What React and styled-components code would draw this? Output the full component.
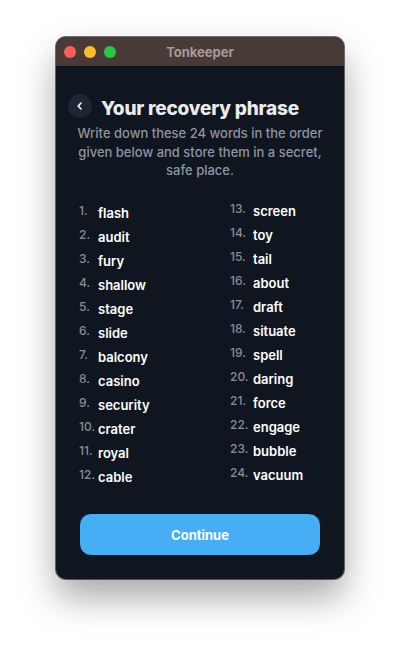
import React from "react"
import styled, { createGlobalStyle } from "styled-components"

const GlobalStyle = createGlobalStyle`
  html, body {
    margin: 0;
    padding: 0;
    background: #ffffff;
  }
  body {
    font-family: Inter, "DejaVu Sans", sans-serif;
  }
`

const Page = styled.div`
  width: 400px;
  height: 653px;
  padding: 37px 0 0 56px;
  box-sizing: border-box;
`

const Window = styled.div`
  width: 288px;
  height: 542px;
  border-radius: 10px;
  overflow: hidden;
  display: flex;
  flex-direction: column;
  background: #10161f;
  box-shadow: 0 0 0 1px rgba(0, 0, 0, 0.55), 0 18px 36px rgba(0, 0, 0, 0.35);
`

const TitleBar = styled.div`
  height: 29px;
  flex-shrink: 0;
  display: grid;
  grid-template-columns: 60px 1fr 60px;
  align-items: center;
  padding: 0 8px;
  background: #483a37;
  border-bottom: 1px solid #0b0f15;
`

const Lights = styled.div`
  display: flex;
  gap: 8px;
`

const Light = styled.span`
  width: 12px;
  height: 12px;
  border-radius: 50%;
  background: ${({ color }) => color};
`

const WindowTitle = styled.div`
  text-align: center;
  font-size: 13px;
  font-weight: 700;
  color: #a59a97;
`

const Content = styled.div`
  flex: 1;
  display: flex;
  flex-direction: column;
  padding: 27px 0 23px;
`

const Header = styled.div`
  display: grid;
  grid-template-columns: 24px 1fr 24px;
  align-items: start;
  padding: 0 12px;
`

const BackButton = styled.button`
  width: 24px;
  height: 24px;
  border-radius: 50%;
  border: none;
  padding: 0;
  display: flex;
  align-items: center;
  justify-content: center;
  background: #1d2634;
  cursor: pointer;
`

const Title = styled.h1`
  margin: 3px 0 0;
  text-align: center;
  font-size: 19px;
  line-height: 24px;
  font-weight: 800;
  letter-spacing: -0.2px;
  color: #e9ebee;
`

const Subtitle = styled.p`
  margin: 3px 0 0;
  padding: 0 20px;
  text-align: center;
  font-size: 13px;
  line-height: 18.5px;
  font-weight: 500;
  color: #8c95a2;
`

const WordGrid = styled.div`
  display: grid;
  grid-template-columns: 151px 1fr;
  padding: 21px 0 0 23px;
`

const Column = styled.ol`
  list-style: none;
  margin: ${({ shift }) => `${-shift}px 0 0`};
  padding: 0;
  display: flex;
  flex-direction: column;
`

const Word = styled.li`
  height: 24px;
  display: flex;
  align-items: center;
`

const Index = styled.span`
  width: ${({ w }) => w}px;
  flex-shrink: 0;
  font-size: 12px;
  font-weight: 500;
  color: #858e9b;
  position: relative;
  top: -2px;
`

const WordText = styled.span`
  font-size: 13px;
  font-weight: 600;
  color: #ffffff;
`

const Footer = styled.div`
  margin-top: auto;
  padding: 0 23px;
`

const ContinueButton = styled.button`
  width: 100%;
  height: 43px;
  border-radius: 12px;
  border: 1px solid #0a0d12;
  background: #45aef5;
  color: #ffffff;
  font-family: inherit;
  font-size: 13px;
  font-weight: 700;
  cursor: pointer;
`

const words = [
  "flash", "audit", "fury", "shallow", "stage", "slide",
  "balcony", "casino", "security", "crater", "royal", "cable",
  "screen", "toy", "tail", "about", "draft", "situate",
  "spell", "daring", "force", "engage", "bubble", "vacuum",
]

const ChevronLeft = () => (
  <svg width="10" height="10" viewBox="0 0 10 10" fill="none">
    <path d="M6 2 L3.2 5 L6 8" stroke="#ffffff" strokeWidth="1.6" strokeLinecap="round" strokeLinejoin="round" />
  </svg>
)

export default function App() {
  const left = words.slice(0, 12)
  const right = words.slice(12)
  return (
    <Page>
      <GlobalStyle />
      <Window>
        <TitleBar>
          <Lights>
            <Light color="#fe5f57" />
            <Light color="#febc2e" />
            <Light color="#28c840" />
          </Lights>
          <WindowTitle>Tonkeeper</WindowTitle>
        </TitleBar>
        <Content>
          <Header>
            <BackButton aria-label="Back">
              <ChevronLeft />
            </BackButton>
            <Title>Your recovery phrase</Title>
          </Header>
          <Subtitle>
            Write down these 24 words in the order given below and store them in a secret, safe place.
          </Subtitle>
          <WordGrid>
            <Column shift={0}>
              {left.map((w, i) => (
                <Word key={w}>
                  <Index w={19}>{i + 1}.</Index>
                  <WordText>{w}</WordText>
                </Word>
              ))}
            </Column>
            <Column shift={2}>
              {right.map((w, i) => (
                <Word key={w}>
                  <Index w={23}>{i + 13}.</Index>
                  <WordText>{w}</WordText>
                </Word>
              ))}
            </Column>
          </WordGrid>
          <Footer>
            <ContinueButton>Continue</ContinueButton>
          </Footer>
        </Content>
      </Window>
    </Page>
  )
}
